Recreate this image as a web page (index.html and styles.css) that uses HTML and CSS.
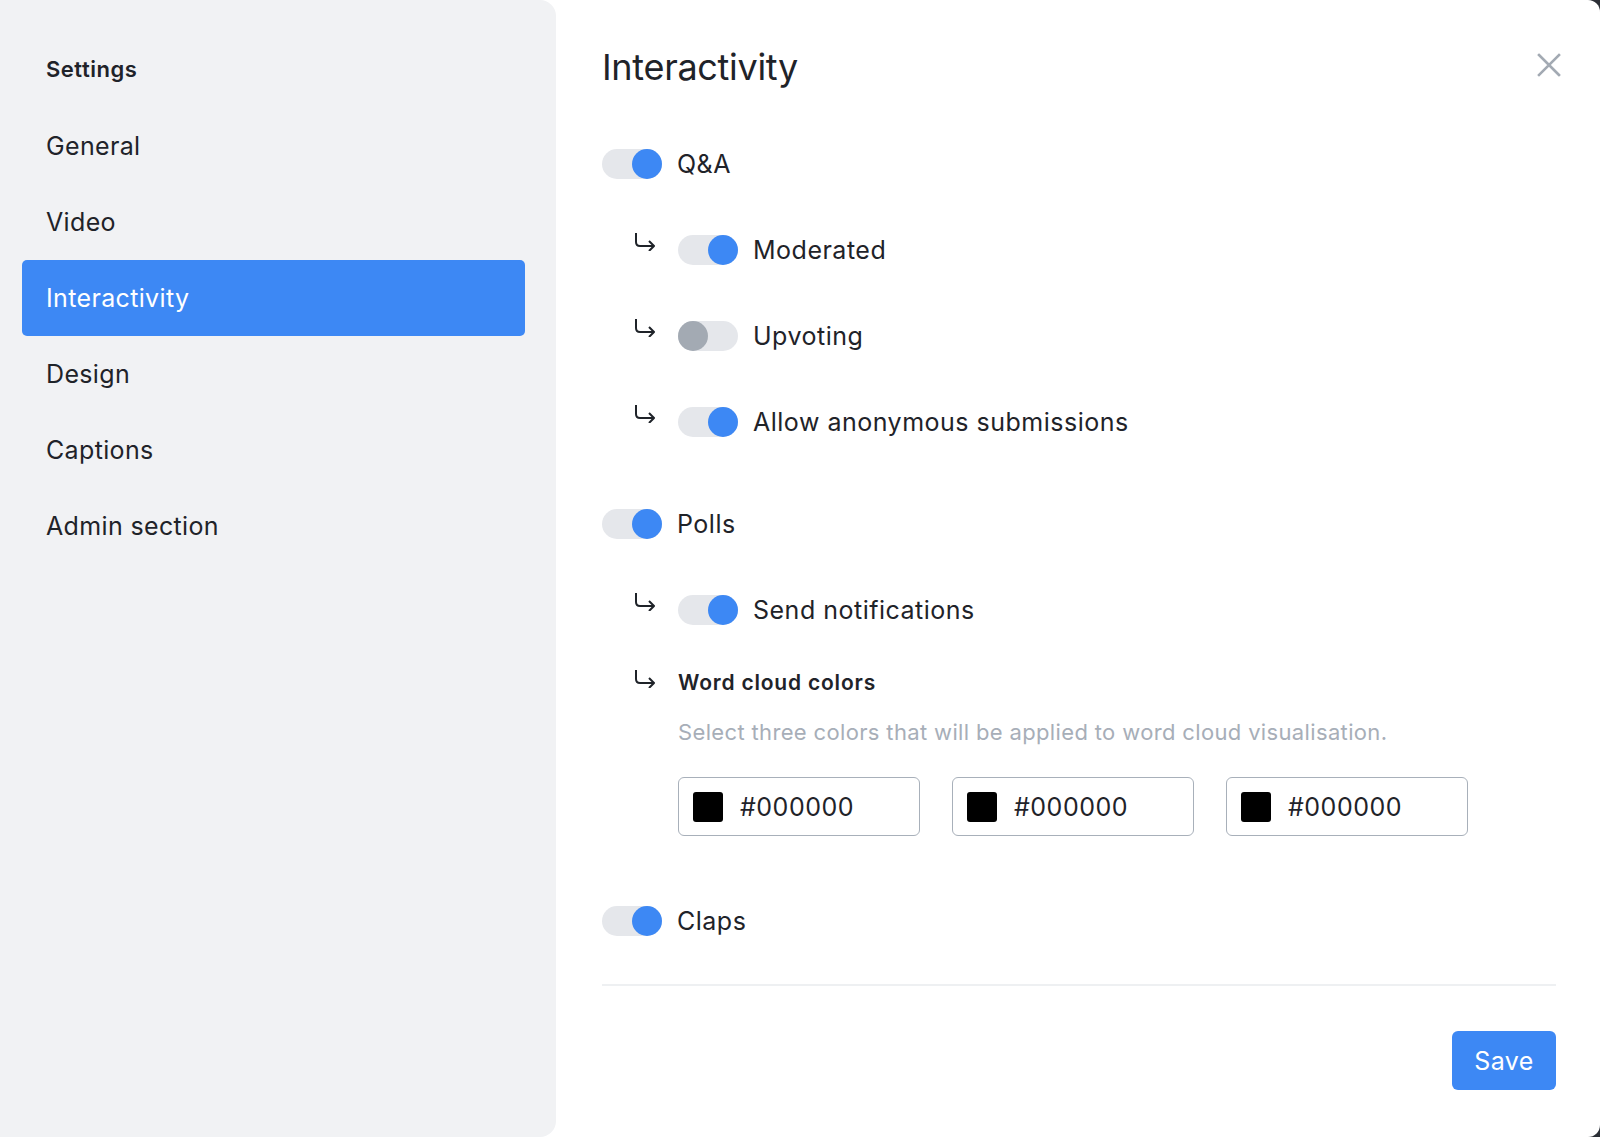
FILE: index.html
```html
<!DOCTYPE html>
<html lang="en">
<head>
<meta charset="utf-8">
<title>Settings – Interactivity</title>
<link rel="stylesheet" href="styles.css">
</head>
<body>
<div class="modal">
  <aside class="sidebar">
    <div class="sidebar-title">Settings</div>
    <nav class="nav">
      <a class="nav-item">General</a>
      <a class="nav-item">Video</a>
      <a class="nav-item active">Interactivity</a>
      <a class="nav-item">Design</a>
      <a class="nav-item">Captions</a>
      <a class="nav-item">Admin section</a>
    </nav>
  </aside>
  <main class="panel">
    <header class="panel-header">
      <h1 class="panel-title">Interactivity</h1>
      <button class="close" aria-label="Close">
        <svg viewBox="0 0 24 24" width="24" height="24"><path d="M2 2 L22 22 M22 2 L2 22" stroke="#a3aab3" stroke-width="2.6" stroke-linecap="square" fill="none"/></svg>
      </button>
    </header>

    <div class="options">
      <section class="group">
        <div class="row"><span class="toggle on"><span class="knob"></span></span><span class="label">Q&amp;A</span></div>
        <div class="row sub">
          <svg class="arrow" viewBox="0 0 22 19"><path d="M2 1 V10 Q2 14 6 14 H20 M15 9 L20 14 L15 19" stroke="#1f2329" stroke-width="2" fill="none" stroke-linejoin="round"/></svg>
          <span class="toggle on"><span class="knob"></span></span><span class="label">Moderated</span>
        </div>
        <div class="row sub">
          <svg class="arrow" viewBox="0 0 22 19"><path d="M2 1 V10 Q2 14 6 14 H20 M15 9 L20 14 L15 19" stroke="#1f2329" stroke-width="2" fill="none" stroke-linejoin="round"/></svg>
          <span class="toggle"><span class="knob"></span></span><span class="label">Upvoting</span>
        </div>
        <div class="row sub">
          <svg class="arrow" viewBox="0 0 22 19"><path d="M2 1 V10 Q2 14 6 14 H20 M15 9 L20 14 L15 19" stroke="#1f2329" stroke-width="2" fill="none" stroke-linejoin="round"/></svg>
          <span class="toggle on"><span class="knob"></span></span><span class="label">Allow anonymous submissions</span>
        </div>
      </section>

      <section class="group">
        <div class="row"><span class="toggle on"><span class="knob"></span></span><span class="label">Polls</span></div>
        <div class="row sub">
          <svg class="arrow" viewBox="0 0 22 19"><path d="M2 1 V10 Q2 14 6 14 H20 M15 9 L20 14 L15 19" stroke="#1f2329" stroke-width="2" fill="none" stroke-linejoin="round"/></svg>
          <span class="toggle on"><span class="knob"></span></span><span class="label">Send notifications</span>
        </div>
        <div class="row sub block">
          <svg class="arrow arrow-block" viewBox="0 0 22 19"><path d="M2 1 V10 Q2 14 6 14 H20 M15 9 L20 14 L15 19" stroke="#1f2329" stroke-width="2" fill="none" stroke-linejoin="round"/></svg>
          <div class="colors">
            <div class="colors-title">Word cloud colors</div>
            <div class="colors-desc">Select three colors that will be applied to word cloud visualisation.</div>
            <div class="color-inputs">
              <div class="color-input"><span class="swatch"></span><span class="hex">#000000</span></div>
              <div class="color-input"><span class="swatch"></span><span class="hex">#000000</span></div>
              <div class="color-input"><span class="swatch"></span><span class="hex">#000000</span></div>
            </div>
          </div>
        </div>
      </section>

      <section class="group">
        <div class="row"><span class="toggle on"><span class="knob"></span></span><span class="label">Claps</span></div>
      </section>
    </div>

    <div class="divider"></div>
    <footer class="panel-footer">
      <button class="save">Save</button>
    </footer>
  </main>
</div>
</body>
</html>
```

FILE: styles.css
```css
* { box-sizing: border-box; }

html, body {
  margin: 0;
  padding: 0;
}

body {
  width: 1600px;
  height: 1137px;
  overflow: hidden;
  background: #2b2f36;
  font-family: Inter, "Noto Sans", "Liberation Sans", sans-serif;
  color: #1f2329;
}

.modal {
  width: 1600px;
  height: 1137px;
  display: flex;
  background: #ffffff;
  border-radius: 0 12px 12px 0;
  overflow: hidden;
}

/* Sidebar */
.sidebar {
  width: 556px;
  flex: none;
  background: #f1f2f4;
  border-radius: 0 16px 16px 0;
  padding: 54px 31px 0 22px;
}

.sidebar-title {
  font-size: 22px;
  font-weight: 600;
  line-height: 30px;
  padding-left: 24px;
  margin-bottom: 24px;
  letter-spacing: 0.5px;
}

.nav {
  display: flex;
  flex-direction: column;
}

.nav-item {
  display: block;
  height: 76px;
  line-height: 76px;
  padding-left: 24px;
  font-size: 25px;
  letter-spacing: 0.35px;
  color: #1f2329;
  border-radius: 5px;
}

.nav-item.active {
  background: #3d88f4;
  color: #ffffff;
}

/* Panel */
.panel {
  flex: 1;
  padding: 45px 44px 0 46px;
  display: flex;
  flex-direction: column;
}

.panel-header {
  display: flex;
  align-items: center;
  justify-content: space-between;
  height: 44px;
}

.panel-title {
  margin: 0;
  font-size: 36px;
  font-weight: 400;
  line-height: 44px;
  letter-spacing: -0.3px;
  color: #1f2329;
}

.close {
  border: 0;
  background: none;
  padding: 0;
  width: 24px;
  height: 24px;
  margin-right: -5px;
  margin-top: -4px;
  display: flex;
}

.options {
  margin-top: 60px;
}

.group + .group {
  margin-top: 72px;
}

.group:last-child {
  margin-top: 70px;
}

.row {
  display: flex;
  align-items: center;
  height: 30px;
}

.sub {
  margin-top: 56px;
  padding-left: 32px;
}

.arrow {
  width: 22px;
  height: 19px;
  margin-right: 22px;
  align-self: flex-start;
  margin-top: -3px;
  flex: none;
}

.arrow-block {
  margin-top: 1px;
}

.toggle {
  width: 60px;
  height: 30px;
  border-radius: 15px;
  background: #e5e7eb;
  display: flex;
  justify-content: flex-start;
  flex: none;
}

.toggle .knob {
  width: 30px;
  height: 30px;
  border-radius: 50%;
  background: #a3aab3;
}

.toggle.on {
  justify-content: flex-end;
}

.toggle.on .knob {
  background: #3d88f4;
}

.label {
  margin-left: 15px;
  font-size: 25px;
  line-height: 30px;
  letter-spacing: 0.5px;
}

.block {
  height: auto;
  align-items: flex-start;
  margin-top: 43px;
}

.colors {
  display: flex;
  flex-direction: column;
}

.colors-title {
  font-size: 21px;
  font-weight: 600;
  line-height: 30px;
  letter-spacing: 0.8px;
}

.colors-desc {
  margin-top: 19px;
  font-size: 22px;
  line-height: 30px;
  letter-spacing: 0.35px;
  color: #a7aeb8;
}

.color-inputs {
  margin-top: 30px;
  display: flex;
  gap: 32px;
}

.color-input {
  width: 242px;
  height: 59px;
  border: 1.5px solid #a8b0ba;
  border-radius: 6px;
  display: flex;
  align-items: center;
  padding-left: 14px;
}

.swatch {
  width: 30px;
  height: 30px;
  border-radius: 3px;
  background: #000000;
  flex: none;
}

.hex {
  margin-left: 17px;
  font-size: 25px;
  letter-spacing: 0.5px;
  color: #1f2329;
}

.divider {
  margin-top: 48px;
  height: 2px;
  background: #eef0f2;
}

.panel-footer {
  display: flex;
  justify-content: flex-end;
  margin-top: 45px;
}

.save {
  width: 104px;
  height: 59px;
  border: 0;
  border-radius: 6px;
  background: #3d88f4;
  color: #ffffff;
  font-family: inherit;
  font-size: 25px;
  letter-spacing: 0.4px;
}
```
